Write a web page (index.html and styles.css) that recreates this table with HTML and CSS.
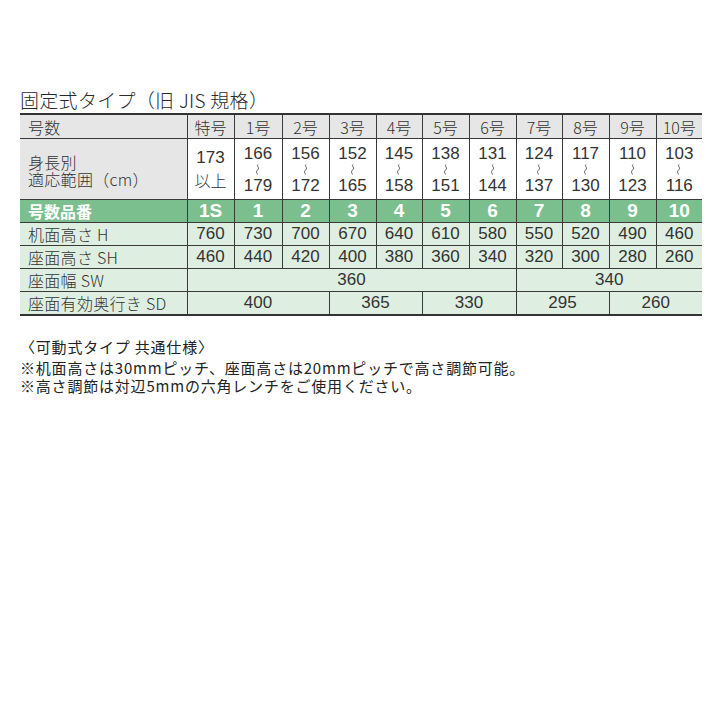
FILE: index.html
```html
<!DOCTYPE html>
<html lang="ja">
<head>
<meta charset="utf-8">
<link rel="stylesheet" href="styles.css">
</head>
<body>
<div class="page">
  <div class="title">固定式タイプ（旧 JIS 規格）</div>
  <table class="spec">
    <colgroup>
      <col class="c-label"><col class="c47"><col class="c48"><col class="c47"><col class="c47"><col class="c46"><col class="c47"><col class="c47"><col class="c46"><col class="c47"><col class="c47"><col class="c46">
    </colgroup>
    <tr class="r-head">
      <td class="lab">号数</td><td>特号</td><td>1号</td><td>2号</td><td>3号</td><td>4号</td><td>5号</td><td>6号</td><td>7号</td><td>8号</td><td>9号</td><td>10号</td>
    </tr>
    <tr class="r-range">
      <td class="lab"><div class="lab2">身長別<br>適応範囲（cm）</div></td>
      <td><div class="sp"><span class="n2">173</span><span class="n2 jp">以上</span></div></td>
      <td><div class="rg"><span>166</span><svg class="tl" viewBox="0 0 6 11"><path d="M3 0.5C1 2 5 3.5 3 5.5S1 9 3 10.5"/></svg><span>179</span></div></td>
      <td><div class="rg"><span>156</span><svg class="tl" viewBox="0 0 6 11"><path d="M3 0.5C1 2 5 3.5 3 5.5S1 9 3 10.5"/></svg><span>172</span></div></td>
      <td><div class="rg"><span>152</span><svg class="tl" viewBox="0 0 6 11"><path d="M3 0.5C1 2 5 3.5 3 5.5S1 9 3 10.5"/></svg><span>165</span></div></td>
      <td><div class="rg"><span>145</span><svg class="tl" viewBox="0 0 6 11"><path d="M3 0.5C1 2 5 3.5 3 5.5S1 9 3 10.5"/></svg><span>158</span></div></td>
      <td><div class="rg"><span>138</span><svg class="tl" viewBox="0 0 6 11"><path d="M3 0.5C1 2 5 3.5 3 5.5S1 9 3 10.5"/></svg><span>151</span></div></td>
      <td><div class="rg"><span>131</span><svg class="tl" viewBox="0 0 6 11"><path d="M3 0.5C1 2 5 3.5 3 5.5S1 9 3 10.5"/></svg><span>144</span></div></td>
      <td><div class="rg"><span>124</span><svg class="tl" viewBox="0 0 6 11"><path d="M3 0.5C1 2 5 3.5 3 5.5S1 9 3 10.5"/></svg><span>137</span></div></td>
      <td><div class="rg"><span>117</span><svg class="tl" viewBox="0 0 6 11"><path d="M3 0.5C1 2 5 3.5 3 5.5S1 9 3 10.5"/></svg><span>130</span></div></td>
      <td><div class="rg"><span>110</span><svg class="tl" viewBox="0 0 6 11"><path d="M3 0.5C1 2 5 3.5 3 5.5S1 9 3 10.5"/></svg><span>123</span></div></td>
      <td><div class="rg"><span>103</span><svg class="tl" viewBox="0 0 6 11"><path d="M3 0.5C1 2 5 3.5 3 5.5S1 9 3 10.5"/></svg><span>116</span></div></td>
    </tr>
    <tr class="r-green">
      <td class="lab">号数品番</td><td>1S</td><td>1</td><td>2</td><td>3</td><td>4</td><td>5</td><td>6</td><td>7</td><td>8</td><td>9</td><td>10</td>
    </tr>
    <tr class="r-data">
      <td class="lab">机面高さ H</td><td>760</td><td>730</td><td>700</td><td>670</td><td>640</td><td>610</td><td>580</td><td>550</td><td>520</td><td>490</td><td>460</td>
    </tr>
    <tr class="r-data">
      <td class="lab">座面高さ SH</td><td>460</td><td>440</td><td>420</td><td>400</td><td>380</td><td>360</td><td>340</td><td>320</td><td>300</td><td>280</td><td>260</td>
    </tr>
    <tr class="r-data">
      <td class="lab">座面幅 SW</td><td colspan="7">360</td><td colspan="4">340</td>
    </tr>
    <tr class="r-data r-last">
      <td class="lab">座面有効奥行き SD</td><td colspan="3">400</td><td colspan="2">365</td><td colspan="2">330</td><td colspan="2">295</td><td colspan="2">260</td>
    </tr>
  </table>
  <div class="notes">
    <div class="note-head">〈可動式タイプ 共通仕様〉</div>
    <div class="note">※机面高さは30mmピッチ、座面高さは20mmピッチで高さ調節可能。</div>
    <div class="note">※高さ調節は対辺5mmの六角レンチをご使用ください。</div>
  </div>
</div>
</body>
</html>
```

FILE: styles.css
```css
html, body {
  margin: 0;
  padding: 0;
  background: #ffffff;
}
.page {
  padding: 88px 0 0 20px;
  font-family: "Noto Sans CJK JP", "Liberation Sans", sans-serif;
  color: #2a2a2a;
}
.title {
  font-size: 19px;
  line-height: 24px;
  height: 25px;
  letter-spacing: 0.3px;
  font-weight: 300;
}
.spec {
  border-collapse: collapse;
  table-layout: fixed;
  width: 682px;
}
.c-label { width: 167px; }
.c48 { width: 48px; }
.c47 { width: 47px; }
.c46 { width: 46px; }
.spec td {
  border: 1px solid #3a3a3a;
  padding: 0;
  text-align: center;
  vertical-align: middle;
  font-family: "Liberation Sans", "Noto Sans CJK JP", sans-serif;
  font-size: 17px;
  line-height: 20px;
  color: #333;
  white-space: nowrap;
}
.spec td:first-child { border-left: none; }
.spec td:last-child { border-right: none; }
.spec td.lab {
  text-align: left;
  padding-left: 8px;
  font-family: "Noto Sans CJK JP", sans-serif;
  font-size: 16px;
  letter-spacing: 0.3px;
  font-weight: 300;
}
.r-head td {
  border-top: 2px solid #333;
  background: #e6e6e6;
  height: 23px;
  font-family: "Noto Sans CJK JP", "Liberation Sans", sans-serif;
  font-size: 16px;
  font-weight: 300;
}
.r-range td {
  height: 60px;
  background: #ffffff;
}
.r-range td.lab { background: #e6e6e6; }
.lab2 {
  line-height: 17px;
  padding-top: 4px;
}
.sp {
  display: flex;
  flex-direction: column;
  align-items: center;
}
.n2 { line-height: 23px; }
.jp {
  font-family: "Noto Sans CJK JP", sans-serif;
  font-size: 16px;
  font-weight: 300;
}
.rg {
  display: flex;
  flex-direction: column;
  align-items: center;
  line-height: 17px;
}
.tl {
  display: block;
  width: 6px;
  height: 11px;
  margin: 2px 0;
  fill: none;
  stroke: #444;
  stroke-width: 0.9;
}
.r-green td {
  background: #7bbf8e;
  color: #ffffff;
  font-weight: bold;
  font-size: 19px;
  height: 22px;
}
.spec .r-green td.lab {
  font-weight: bold;
  font-size: 16px;
  letter-spacing: 0;
}
.r-data td {
  background: #deefe1;
  height: 22px;
}
.r-last td { border-bottom: 2px solid #333; }
.notes {
  margin-top: 19px;
  font-family: "Noto Sans CJK JP", sans-serif;
  font-size: 15px;
  letter-spacing: 0.8px;
  color: #222;
}
.note-head { line-height: 24px; }
.note { line-height: 18px; }
```
